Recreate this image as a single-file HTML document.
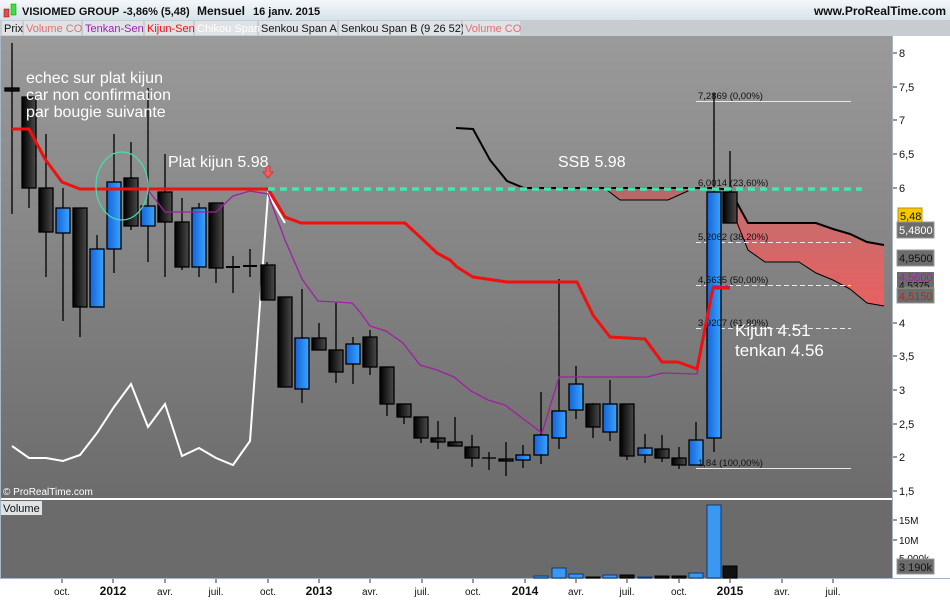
<!DOCTYPE html>
<html><head><meta charset="utf-8"><style>
body{margin:0;width:950px;height:600px;overflow:hidden;background:#fff;font-family:"Liberation Sans",sans-serif}
</style></head><body>
<svg width="950" height="600" xmlns="http://www.w3.org/2000/svg" font-family="Liberation Sans, sans-serif">
<defs>
<linearGradient id="bg" x1="0" y1="0" x2="0" y2="1"><stop offset="0" stop-color="#9a9a9a"/><stop offset="1" stop-color="#6c6c6c"/></linearGradient>
<linearGradient id="hd" x1="0" y1="0" x2="0" y2="1"><stop offset="0" stop-color="#f4f8fb"/><stop offset="1" stop-color="#d6e2ea"/></linearGradient>
<linearGradient id="bk" x1="0" y1="0" x2="1" y2="0"><stop offset="0" stop-color="#000"/><stop offset="1" stop-color="#4a4a4a"/></linearGradient>
<linearGradient id="bl" x1="0" y1="0" x2="1" y2="0"><stop offset="0" stop-color="#1464d8"/><stop offset="1" stop-color="#3aa4ff"/></linearGradient>
<linearGradient id="cl" x1="0" y1="0" x2="0" y2="1"><stop offset="0" stop-color="#c07070"/><stop offset="1" stop-color="#e86060"/></linearGradient>
</defs>
<rect x="0" y="0" width="950" height="20" fill="url(#hd)"/>
<rect x="0" y="20" width="950" height="16" fill="#c8ccd0"/>
<rect x="0" y="36" width="892" height="462" fill="url(#bg)"/>
<rect x="0" y="500" width="892" height="78" fill="#6b6b6b"/>
<line x1="0" y1="499" x2="892" y2="499" stroke="#fff" stroke-width="2"/>
<line x1="892.5" y1="36" x2="892.5" y2="578" stroke="#a9b4bc"/>
<line x1="0" y1="578.5" x2="950" y2="578.5" stroke="#a9b4bc"/>
<line x1="0.5" y1="36" x2="0.5" y2="578" stroke="#a9b8c4"/>
<!-- header -->
<rect x="4" y="9" width="5" height="8" fill="#e05050" stroke="#800" stroke-width=".5"/>
<rect x="11" y="4" width="5" height="11" fill="#40e040" stroke="#080" stroke-width=".5"/>
<g font-size="11" font-weight="bold" fill="#101010">
<text x="22" y="15">VISIOMED GROUP</text>
<text x="123" y="15">-3,86% (5,48)</text>
<text x="197" y="15" font-size="12">Mensuel</text>
<text x="253" y="15">16 janv. 2015</text>
</g>
<text x="946" y="15" font-size="12" font-weight="bold" fill="#101010" text-anchor="end">www.ProRealTime.com</text>
<g font-size="11">
<rect x="2" y="21" width="20" height="14" fill="#dfe3e6"/><text x="4" y="32" fill="#111">Prix</text>
<rect x="24" y="21" width="57" height="14" fill="#dfe3e6"/><text x="26" y="32" fill="#e07070">Volume CO</text>
<rect x="83" y="21" width="60" height="14" fill="#dfe3e6"/><text x="85" y="32" fill="#a020b0">Tenkan-Sen</text>
<rect x="145" y="21" width="48" height="14" fill="#dfe3e6"/><text x="147" y="32" fill="#f01010">Kijun-Sen</text>
<rect x="195" y="21" width="62" height="14" fill="#dfe3e6"/><text x="197" y="32" fill="#fff">Chikou Span</text>
<rect x="259" y="21" width="78" height="14" fill="#dfe3e6"/><text x="261" y="32" fill="#111">Senkou Span A</text>
<rect x="339" y="21" width="122" height="14" fill="#dfe3e6"/><text x="341" y="32" fill="#111">Senkou Span B (9 26 52)</text>
<rect x="463" y="21" width="57" height="14" fill="#dfe3e6"/><text x="465" y="32" fill="#e07070">Volume CO</text>
</g>
<!-- cloud -->
<polygon points="607,190 620,200 668,200 690,190" fill="#b86868"/>
<polygon points="730,190 748,223 816,223 833,229 850,234 867,242 884,245 884,306 867,303 850,289 833,280 816,273 799,262 765,262 748,250 730,215" fill="url(#cl)"/>
<polyline points="456,128 473,129 490,160 507,181 524,188 697,188 714,188 730,190 748,223 816,223 833,229 850,234 867,242 884,245" fill="none" stroke="#000" stroke-width="2"/>
<polyline points="607,190 620,200 668,200 690,190" fill="none" stroke="#000" stroke-width="1"/>
<polyline points="730,205 748,250 765,262 799,262 816,273 833,280 850,289 867,303 884,306" fill="none" stroke="#000" stroke-width="1"/>
<!-- fib lines -->
<g stroke="#e8e8e8" stroke-width="1">
<line x1="696" y1="101.5" x2="851" y2="101.5"/>
<line x1="696" y1="242.5" x2="851" y2="242.5" stroke-dasharray="5,3"/>
<line x1="696" y1="285.5" x2="851" y2="285.5" stroke-dasharray="5,3"/>
<line x1="696" y1="328.5" x2="851" y2="328.5" stroke-dasharray="5,3"/>
<line x1="696" y1="468.5" x2="851" y2="468.5"/>
</g>
<!-- chikou -->
<polyline points="12,446 29,458 46,458 63,461 80,455 97,433 114,407 131,384 148,427 165,404 182,456 199,448 216,458 233,465 250,441 268,194 285,223" fill="none" stroke="#fff" stroke-width="2"/>
<!-- candles -->
<g stroke="#000" stroke-width="1.3">
<line x1="12" y1="43" x2="12" y2="214"/><rect x="5" y="88" width="14" height="3" fill="#111"/>
<line x1="29" y1="97" x2="29" y2="208"/><rect x="22" y="97" width="14" height="91" fill="url(#bk)"/>
<line x1="46" y1="134" x2="46" y2="277"/><rect x="39" y="188" width="14" height="44" fill="url(#bk)"/>
<line x1="63" y1="188" x2="63" y2="321"/><rect x="56" y="208" width="14" height="25" fill="url(#bl)"/>
<line x1="80" y1="208" x2="80" y2="337"/><rect x="73" y="208" width="14" height="99" fill="url(#bk)"/>
<line x1="97" y1="235" x2="97" y2="307"/><rect x="90" y="249" width="14" height="58" fill="url(#bl)"/>
<line x1="114" y1="134" x2="114" y2="273"/><rect x="107" y="182" width="14" height="67" fill="url(#bl)"/>
<line x1="131" y1="142" x2="131" y2="230"/><rect x="124" y="178" width="14" height="48" fill="url(#bk)"/>
<line x1="148" y1="88" x2="148" y2="262"/><rect x="141" y="206" width="14" height="20" fill="url(#bl)"/>
<line x1="165" y1="154" x2="165" y2="277"/><rect x="158" y="192" width="14" height="30" fill="url(#bk)"/>
<line x1="182" y1="198" x2="182" y2="270"/><rect x="175" y="222" width="14" height="45" fill="url(#bk)"/>
<line x1="199" y1="203" x2="199" y2="277"/><rect x="192" y="208" width="14" height="59" fill="url(#bl)"/>
<line x1="216" y1="203" x2="216" y2="283"/><rect x="209" y="203" width="14" height="65" fill="url(#bk)"/>
<line x1="233" y1="256" x2="233" y2="293"/><line x1="226" y1="267" x2="240" y2="267" stroke-width="2"/>
<line x1="250" y1="249" x2="250" y2="277"/><line x1="243" y1="266" x2="257" y2="266" stroke-width="2"/>
<line x1="267" y1="262" x2="267" y2="300"/><rect x="261" y="265" width="14" height="35" fill="url(#bk)"/>
<rect x="278" y="297" width="14" height="90" fill="url(#bk)"/>
<line x1="302" y1="289" x2="302" y2="403"/><rect x="295" y="338" width="14" height="51" fill="url(#bl)"/>
<line x1="319" y1="323" x2="319" y2="350"/><rect x="312" y="338" width="14" height="12" fill="url(#bk)"/>
<line x1="336" y1="303" x2="336" y2="383"/><rect x="329" y="350" width="14" height="22" fill="url(#bk)"/>
<line x1="353" y1="337" x2="353" y2="384"/><rect x="346" y="344" width="14" height="20" fill="url(#bl)"/>
<line x1="370" y1="330" x2="370" y2="375"/><rect x="363" y="337" width="14" height="30" fill="url(#bk)"/>
<line x1="387" y1="367" x2="387" y2="416"/><rect x="380" y="367" width="14" height="37" fill="url(#bk)"/>
<line x1="404" y1="404" x2="404" y2="424"/><rect x="397" y="404" width="14" height="13" fill="url(#bk)"/>
<line x1="421" y1="417" x2="421" y2="443"/><rect x="414" y="417" width="14" height="21" fill="url(#bk)"/>
<line x1="438" y1="421" x2="438" y2="449"/><rect x="431" y="438" width="14" height="4" fill="url(#bk)"/>
<line x1="455" y1="417" x2="455" y2="446"/><rect x="448" y="442" width="14" height="4" fill="url(#bk)"/>
<line x1="472" y1="435" x2="472" y2="467"/><rect x="465" y="447" width="14" height="11" fill="url(#bk)"/>
<line x1="489" y1="452" x2="489" y2="470"/><line x1="482" y1="458" x2="496" y2="458"/>
<line x1="506" y1="442" x2="506" y2="476"/><rect x="499" y="459" width="14" height="2" fill="url(#bk)"/>
<line x1="523" y1="445" x2="523" y2="468"/><rect x="516" y="455" width="14" height="5" fill="url(#bl)"/>
<line x1="541" y1="392" x2="541" y2="464"/><rect x="534" y="435" width="14" height="20" fill="url(#bl)"/>
<line x1="559" y1="279" x2="559" y2="449"/><rect x="552" y="411" width="14" height="27" fill="url(#bl)"/>
<line x1="576" y1="366" x2="576" y2="419"/><rect x="569" y="384" width="14" height="26" fill="url(#bl)"/>
<line x1="593" y1="403" x2="593" y2="438"/><rect x="586" y="404" width="14" height="23" fill="url(#bk)"/>
<line x1="610" y1="380" x2="610" y2="441"/><rect x="603" y="404" width="14" height="28" fill="url(#bl)"/>
<line x1="627" y1="404" x2="627" y2="460"/><rect x="620" y="404" width="14" height="52" fill="url(#bk)"/>
<line x1="645" y1="434" x2="645" y2="463"/><rect x="638" y="448" width="14" height="7" fill="url(#bl)"/>
<line x1="662" y1="435" x2="662" y2="462"/><rect x="655" y="449" width="14" height="9" fill="url(#bk)"/>
<line x1="679" y1="447" x2="679" y2="469"/><rect x="672" y="458" width="14" height="7" fill="url(#bk)"/>
<line x1="696" y1="422" x2="696" y2="465"/><rect x="689" y="440" width="14" height="25" fill="url(#bl)"/>
<line x1="714" y1="93" x2="714" y2="452"/><rect x="707" y="192" width="14" height="246" fill="url(#bl)"/>
<line x1="730" y1="151" x2="730" y2="223"/><rect x="723" y="192" width="14" height="31" fill="url(#bk)"/>
</g>
<g font-size="9.5" fill="#111">
<text x="698" y="99">7,2869 (0,00%)</text>
<text x="698" y="186">6,0014 (23,60%)</text>
<text x="698" y="240">5,2062 (38,20%)</text>
<text x="698" y="283">4,5635 (50,00%)</text>
<text x="698" y="326">3,9207 (61,80%)</text>
<text x="698" y="466">1,84 (100,00%)</text>
</g>
<!-- tenkan -->
<polyline points="148,190 165,212 216,212 233,196 250,191 268,194 285,240 302,279 318,301 335,302 352,303 360,312 370,326 386,331 403,343 420,365 437,370 454,377 471,391 488,400 505,405 522,418 542,433 559,377 647,377 663,373 697,374 713,286 730,286" fill="none" stroke="#a020a0" stroke-width="1.3"/>
<!-- kijun -->
<polyline points="12,129 29,129 45,159 62,182 80,189 268,189 285,217 301,223 405,223 420,237 437,253 450,260 457,267 473,277 507,282 577,282 593,315 610,337 645,339 662,362 678,362 697,369 713,288 730,288" fill="none" stroke="#f01010" stroke-width="3"/>
<!-- teal dashed -->
<line x1="268" y1="189" x2="862" y2="189" stroke="#40e8b0" stroke-width="3.5" stroke-dasharray="7,5"/>
<ellipse cx="122" cy="186" rx="26" ry="34" fill="none" stroke="#40e0b0" stroke-width="1.2"/>
<path d="M266 166 h4 v6 h3 l-5 6 l-5 -6 h3 z" fill="#f06060" stroke="#c02020" stroke-width=".6"/>
<!-- annotations -->
<g fill="#fff" font-size="16">
<text x="26" y="83">echec sur plat kijun</text>
<text x="26" y="100">car non confirmation</text>
<text x="26" y="117">par bougie suivante</text>
<text x="168" y="167">Plat kijun 5.98</text>
<text x="558" y="167">SSB 5.98</text>
<text x="735" y="336" font-size="17">Kijun 4.51</text>
<text x="735" y="356" font-size="17">tenkan 4.56</text>
</g>
<text x="3" y="495" font-size="10" fill="#fff">© ProRealTime.com</text>
<rect x="1" y="501" width="41" height="14" fill="#dfe3e6"/><text x="3" y="512" font-size="11" fill="#111">Volume</text>
<!-- volume bars -->
<g stroke="#0a3a80" stroke-width="1" fill="#3a98f0">
<rect x="534" y="576" width="14" height="2"/><rect x="552" y="568" width="14" height="10"/><rect x="569" y="574" width="14" height="4"/>
<rect x="603" y="575" width="14" height="3"/><rect x="638" y="577" width="14" height="1"/>
<rect x="689" y="573" width="14" height="5"/><rect x="707" y="505" width="14" height="73"/>
</g>
<g fill="#111" stroke="#000"><rect x="586" y="577" width="14" height="1"/><rect x="620" y="575" width="14" height="3"/><rect x="655" y="576" width="14" height="2"/><rect x="672" y="576" width="14" height="2"/><rect x="723" y="566" width="14" height="12"/></g>
<!-- right axis -->
<g font-size="11" fill="#111">
<g stroke="#333"><line x1="893" y1="53" x2="897" y2="53"/><line x1="893" y1="87" x2="897" y2="87"/><line x1="893" y1="120" x2="897" y2="120"/><line x1="893" y1="154" x2="897" y2="154"/><line x1="893" y1="188" x2="897" y2="188"/><line x1="893" y1="323" x2="897" y2="323"/><line x1="893" y1="356" x2="897" y2="356"/><line x1="893" y1="390" x2="897" y2="390"/><line x1="893" y1="424" x2="897" y2="424"/><line x1="893" y1="457" x2="897" y2="457"/><line x1="893" y1="491" x2="897" y2="491"/><line x1="893" y1="520" x2="897" y2="520"/><line x1="893" y1="540" x2="897" y2="540"/></g>
<text x="899" y="57">8</text><text x="899" y="91">7,5</text><text x="899" y="124">7</text><text x="899" y="158">6,5</text><text x="899" y="192">6</text>
<text x="899" y="327">4</text><text x="899" y="360">3,5</text><text x="899" y="394">3</text><text x="899" y="428">2,5</text><text x="899" y="461">2</text><text x="899" y="495">1,5</text>
<text x="899" y="524" font-size="10">15M</text><text x="899" y="544" font-size="10">10M</text><text x="899" y="562" font-size="10">5 000k</text>
</g>
<rect x="898" y="208" width="24" height="15" fill="#f5c800" stroke="#c09000"/><text x="900" y="220" font-size="11" fill="#111">5,48</text>
<rect x="897" y="222" width="37" height="16" fill="#6c6c6c" stroke="#999"/><text x="899" y="234" font-size="11" fill="#fff">5,4800</text>
<rect x="897" y="250" width="37" height="16" fill="#6c6c6c" stroke="#999"/><text x="899" y="262" font-size="11" fill="#111">4,9500</text>
<rect x="897" y="272" width="37" height="10" fill="#6c6c6c"/><text x="899" y="281" font-size="11" fill="#a020a0">4,5600</text>
<rect x="897" y="282" width="37" height="8" fill="#6c6c6c"/><text x="899" y="289" font-size="10" fill="#111">4,5375</text>
<rect x="897" y="288" width="37" height="15" fill="#6c6c6c" stroke="#999"/><text x="899" y="300" font-size="11" fill="#f01010">4,5150</text>
<rect x="897" y="559" width="37" height="15" fill="#6c6c6c" stroke="#999"/><text x="899" y="571" font-size="11" fill="#111">3 190k</text>
<!-- x axis -->
<g font-size="10" fill="#111" text-anchor="middle">
<text x="62" y="595">oct.</text><text x="113" y="595" font-weight="bold" font-size="12">2012</text><text x="165" y="595">avr.</text><text x="216" y="595">juil.</text>
<text x="268" y="595">oct.</text><text x="319" y="595" font-weight="bold" font-size="12">2013</text><text x="370" y="595">avr.</text><text x="422" y="595">juil.</text>
<text x="473" y="595">oct.</text><text x="525" y="595" font-weight="bold" font-size="12">2014</text><text x="576" y="595">avr.</text><text x="627" y="595">juil.</text>
<text x="679" y="595">oct.</text><text x="730" y="595" font-weight="bold" font-size="12">2015</text><text x="782" y="595">avr.</text><text x="833" y="595">juil.</text>
</g>
<g stroke="#333"><line x1="62" y1="579" x2="62" y2="583"/><line x1="113" y1="579" x2="113" y2="583"/><line x1="165" y1="579" x2="165" y2="583"/><line x1="216" y1="579" x2="216" y2="583"/><line x1="268" y1="579" x2="268" y2="583"/><line x1="319" y1="579" x2="319" y2="583"/><line x1="370" y1="579" x2="370" y2="583"/><line x1="422" y1="579" x2="422" y2="583"/><line x1="473" y1="579" x2="473" y2="583"/><line x1="525" y1="579" x2="525" y2="583"/><line x1="576" y1="579" x2="576" y2="583"/><line x1="627" y1="579" x2="627" y2="583"/><line x1="679" y1="579" x2="679" y2="583"/><line x1="730" y1="579" x2="730" y2="583"/><line x1="782" y1="579" x2="782" y2="583"/><line x1="833" y1="579" x2="833" y2="583"/></g>
</svg>
</body></html>
